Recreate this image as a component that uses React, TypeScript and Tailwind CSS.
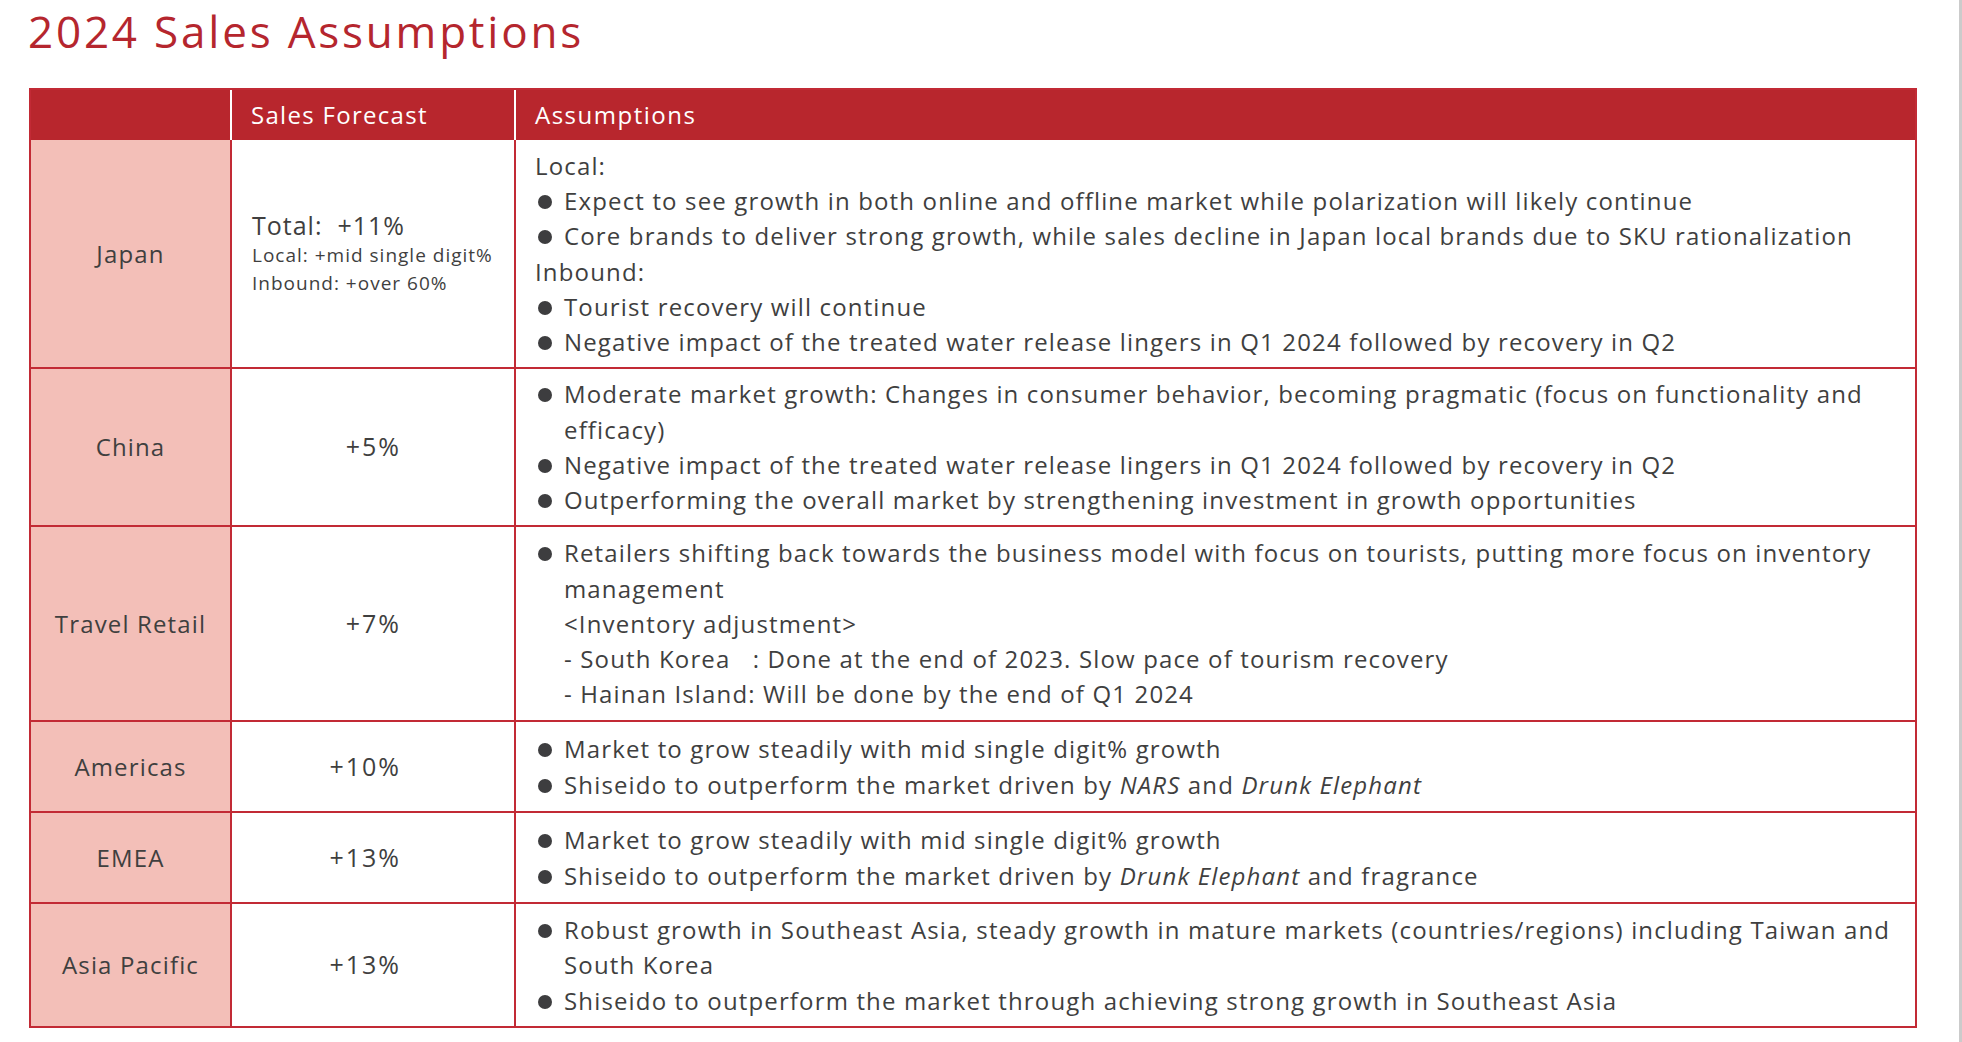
import React from 'react';

type Line =
  | { kind: 'head'; text: React.ReactNode }
  | { kind: 'bullet'; text: React.ReactNode }
  | { kind: 'sub'; text: React.ReactNode };

interface Region {
  name: string;
  forecast: React.ReactNode;
  lines: Line[];
}

const Bullet: React.FC<{ children: React.ReactNode }> = ({ children }) => (
  <div className="flex">
    <span className="w-[29px] shrink-0">
      <span className="mt-[12px] ml-[3px] block h-[14px] w-[14px] rounded-full bg-[#3d3d3f]" />
    </span>
    <span>{children}</span>
  </div>
);

const regions: Region[] = [
  {
    name: 'Japan',
    forecast: (
      <div className="pl-[20px] text-left">
        <div className="text-[25px] leading-[31px] tracking-[1px]">Total:&nbsp;&nbsp;+11%</div>
        <div className="text-[19px] leading-[28px] tracking-[1px]">Local: +mid single digit%</div>
        <div className="text-[19px] leading-[28px] tracking-[1px]">Inbound: +over 60%</div>
      </div>
    ),
    lines: [
      { kind: 'head', text: 'Local:' },
      { kind: 'bullet', text: 'Expect to see growth in both online and offline market while polarization will likely continue' },
      { kind: 'bullet', text: 'Core brands to deliver strong growth, while sales decline in Japan local brands due to SKU rationalization' },
      { kind: 'head', text: 'Inbound:' },
      { kind: 'bullet', text: 'Tourist recovery will continue' },
      { kind: 'bullet', text: 'Negative impact of the treated water release lingers in Q1 2024 followed by recovery in Q2' },
    ],
  },
  {
    name: 'China',
    forecast: '+5%',
    lines: [
      { kind: 'bullet', text: 'Moderate market growth: Changes in consumer behavior, becoming pragmatic (focus on functionality and efficacy)' },
      { kind: 'bullet', text: 'Negative impact of the treated water release lingers in Q1 2024 followed by recovery in Q2' },
      { kind: 'bullet', text: 'Outperforming the overall market by strengthening investment in growth opportunities' },
    ],
  },
  {
    name: 'Travel Retail',
    forecast: '+7%',
    lines: [
      { kind: 'bullet', text: 'Retailers shifting back towards the business model with focus on tourists, putting more focus on inventory management' },
      { kind: 'sub', text: '<Inventory adjustment>' },
      { kind: 'sub', text: '- South Korea\u00a0\u00a0 : Done at the end of 2023. Slow pace of tourism recovery' },
      { kind: 'sub', text: '- Hainan Island: Will be done by the end of Q1 2024' },
    ],
  },
  {
    name: 'Americas',
    forecast: '+10%',
    lines: [
      { kind: 'bullet', text: 'Market to grow steadily with mid single digit% growth' },
      {
        kind: 'bullet',
        text: (
          <>
            Shiseido to outperform the market driven by <i>NARS</i> and <i>Drunk Elephant</i>
          </>
        ),
      },
    ],
  },
  {
    name: 'EMEA',
    forecast: '+13%',
    lines: [
      { kind: 'bullet', text: 'Market to grow steadily with mid single digit% growth' },
      {
        kind: 'bullet',
        text: (
          <>
            Shiseido to outperform the market driven by <i>Drunk Elephant</i> and fragrance
          </>
        ),
      },
    ],
  },
  {
    name: 'Asia Pacific',
    forecast: '+13%',
    lines: [
      { kind: 'bullet', text: 'Robust growth in Southeast Asia, steady growth in mature markets (countries/regions) including Taiwan and South Korea' },
      { kind: 'bullet', text: 'Shiseido to outperform the market through achieving strong growth in Southeast Asia' },
    ],
  },
];

const App: React.FC = () => {
  return (
    <div className="min-h-screen w-full bg-white border-r-[3px] border-[#cbcbcb] font-['Open_Sans',sans-serif] text-[#3f3f3f]">
      <h1 className="pt-[5px] pl-[28px] text-[44px] leading-[53px] font-normal tracking-[2.8px] text-[#b5262e]">
        2024 Sales Assumptions
      </h1>

      <div className="mt-[30px] ml-[29px] w-[1888px] border-2 border-[#c22a35] tracking-[1.15px]">
        <div className="grid grid-cols-[201px_284px_1fr] grid-rows-[50px_229px_158px_195px_91px_91px_122px]">
          {/* header */}
          <div className="bg-[#b8262d] border-r-2 border-white" />
          <div className="flex items-center bg-[#b8262d] border-r-2 border-white pl-[19px] text-[24px] tracking-[1.3px] text-white">
            Sales Forecast
          </div>
          <div className="flex items-center bg-[#b8262d] pl-[19px] text-[24px] tracking-[1.5px] text-white">
            Assumptions
          </div>

          {regions.map((region, i) => {
            const last = i === regions.length - 1;
            const rowBorder = last ? '' : 'border-b-2';
            return (
              <React.Fragment key={region.name}>
                <div
                  className={`flex items-center justify-center bg-[#f3bfb8] border-r-2 border-[#c22a35] text-[24px] ${rowBorder}`}
                >
                  {region.name}
                </div>
                <div
                  className={`flex items-center justify-end border-r-2 border-[#c22a35] pr-[113px] text-[25px] tracking-[2px] ${rowBorder}`}
                  style={typeof region.forecast === 'string' ? undefined : { justifyContent: 'flex-start', paddingRight: 0 }}
                >
                  {region.forecast}
                </div>
                <div
                  className={`flex flex-col justify-center border-[#c22a35] pl-[19px] pr-[6px] text-[24px] leading-[35.3px] ${rowBorder}`}
                >
                  {region.lines.map((line, j) => {
                    if (line.kind === 'bullet') return <Bullet key={j}>{line.text}</Bullet>;
                    if (line.kind === 'sub')
                      return (
                        <div key={j} className="pl-[29px] whitespace-pre">
                          {line.text}
                        </div>
                      );
                    return <div key={j}>{line.text}</div>;
                  })}
                </div>
              </React.Fragment>
            );
          })}
        </div>
      </div>
    </div>
  );
};

export default App;
